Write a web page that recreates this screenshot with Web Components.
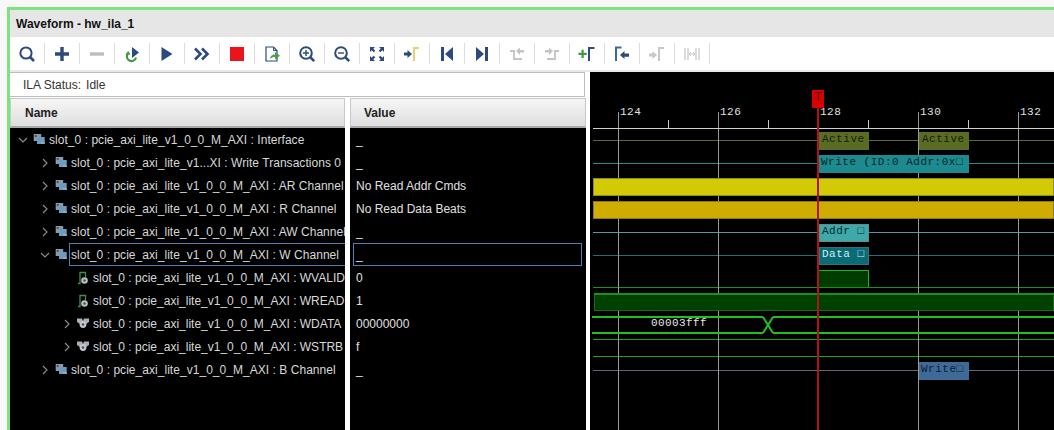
<!DOCTYPE html>
<html>
<head>
<meta charset="utf-8">
<title>Waveform - hw_ila_1</title>
<style>
  html, body { margin: 0; padding: 0; height: 100%; overflow: hidden; background: #f7f8f7; }
  body { font: 12px "Liberation Sans", Arial, sans-serif; }
</style>
</head>
<body>
<wave-window>
  <wave-titlebar>Waveform - hw_ila_1</wave-titlebar>
  <wave-toolbar></wave-toolbar>
  <wave-body>
    <wave-status slot="status">ILA Status:<span style="margin-left:5px">Idle</span></wave-status>
    <wave-header slot="name-head" indent="14">Name</wave-header>
    <wave-header slot="value-head" indent="13">Value</wave-header>

    <tree-row slot="names" level="0" state="open" icon="group">slot_0 : pcie_axi_lite_v1_0_0_M_AXI : Interface</tree-row>
    <tree-row slot="names" level="1" state="closed" icon="group">slot_0 : pcie_axi_lite_v1...XI : Write Transactions 0</tree-row>
    <tree-row slot="names" level="1" state="closed" icon="group">slot_0 : pcie_axi_lite_v1_0_0_M_AXI : AR Channel</tree-row>
    <tree-row slot="names" level="1" state="closed" icon="group">slot_0 : pcie_axi_lite_v1_0_0_M_AXI : R Channel</tree-row>
    <tree-row slot="names" level="1" state="closed" icon="group">slot_0 : pcie_axi_lite_v1_0_0_M_AXI : AW Channel</tree-row>
    <tree-row slot="names" level="1" state="open" icon="group" selected>slot_0 : pcie_axi_lite_v1_0_0_M_AXI : W Channel</tree-row>
    <tree-row slot="names" level="2" icon="wire">slot_0 : pcie_axi_lite_v1_0_0_M_AXI : WVALID</tree-row>
    <tree-row slot="names" level="2" icon="wire">slot_0 : pcie_axi_lite_v1_0_0_M_AXI : WREADY</tree-row>
    <tree-row slot="names" level="2" state="closed" icon="bus">slot_0 : pcie_axi_lite_v1_0_0_M_AXI : WDATA</tree-row>
    <tree-row slot="names" level="2" state="closed" icon="bus">slot_0 : pcie_axi_lite_v1_0_0_M_AXI : WSTRB</tree-row>
    <tree-row slot="names" level="1" state="closed" icon="group">slot_0 : pcie_axi_lite_v1_0_0_M_AXI : B Channel</tree-row>

    <value-row slot="values">_</value-row>
    <value-row slot="values">_</value-row>
    <value-row slot="values">No Read Addr Cmds</value-row>
    <value-row slot="values">No Read Data Beats</value-row>
    <value-row slot="values">_</value-row>
    <value-row slot="values" selected>_</value-row>
    <value-row slot="values">0</value-row>
    <value-row slot="values">1</value-row>
    <value-row slot="values">00000000</value-row>
    <value-row slot="values">f</value-row>
    <value-row slot="values">_</value-row>

    <wave-canvas slot="canvas"></wave-canvas>
  </wave-body>
</wave-window>

<script>
const NAVY = '#2c4a7c';
const GREY = '#bdbdbd';

// toolbar glyphs, 24x24 box with the middle at 12,12
const TOOL_ICONS = {
  search: `<circle cx="11" cy="11" r="5.6" fill="none" stroke="${NAVY}" stroke-width="2"/><path d="M15 15l4 4" stroke="${NAVY}" stroke-width="2.6"/>`,
  plus: `<path d="M5 10.3h14v3.4H5zM10.3 5h3.4v14h-3.4z" fill="${NAVY}"/>`,
  minus: `<path d="M5 10.3h14v3.4H5z" fill="${GREY}"/>`,
  relaunch: `<path d="M12 5l7 5.5-7 5.5z" fill="${NAVY}"/><path d="M8 11.5a4.6 4.6 0 1 0 8 4" fill="none" stroke="#3f9a3f" stroke-width="2.2"/><path d="M5.4 12.5l2.8-3.4 2.4 3.4z" fill="#3f9a3f"/>`,
  play: `<path d="M6.5 5l11 7-11 7z" fill="${NAVY}"/>`,
  forward: `<path d="M5 6.5l5.5 5.5L5 17.5M12 6.5l5.5 5.5-5.5 5.5" fill="none" stroke="${NAVY}" stroke-width="2.6"/>`,
  stop: `<rect x="5" y="5" width="14" height="14" fill="#e9141c"/>`,
  export: `<path d="M6 5h7.5l3.5 3.5V19H6z" fill="#fff" stroke="${NAVY}" stroke-width="1.2"/><path d="M13.500 5v3.500H17" fill="none" stroke="${NAVY}"/><path d="M10 17c0-3 2-4.500 5-4.500V10l5 3.800-5 3.700v-2.500c-2 0-3.500.4-5 2z" fill="#4aa04a"/>`,
  zoomin: `<circle cx="11" cy="11" r="5.800" fill="none" stroke="${NAVY}" stroke-width="2"/><path d="M8 10.300h6v1.400H8zM10.300 8h1.400v6h-1.400z" fill="${NAVY}"/><path d="M15.200 15.200l4 4" stroke="${NAVY}" stroke-width="2.600"/>`,
  zoomout: `<circle cx="11" cy="11" r="5.800" fill="none" stroke="${NAVY}" stroke-width="2"/><path d="M8 10.300h6v1.400H8z" fill="${NAVY}"/><path d="M15.200 15.200l4 4" stroke="${NAVY}" stroke-width="2.600"/>`,
  fit: `<path d="M5 5h5L8.300 6.700l2 2-1.600 1.600-2-2L5 10zM19 5v5l-1.700-1.700-2 2-1.600-1.600 2-2L14 5zM5 19v-5l1.700 1.700 2-2 1.600 1.600-2 2L10 19zM19 19h-5l1.700-1.700-2-2 1.600-1.600 2 2L19 14z" fill="${NAVY}"/>`,
  gotocursor: `<path d="M4 10.500h3.500V8l4.500 4-4.500 4v-2.500H4z" fill="${NAVY}"/><path d="M14 19V6h5" fill="none" stroke="#e8cf7c" stroke-width="2.200"/>`,
  first: `<path d="M6 5h3v14H6zM18 5v14l-8-7z" fill="${NAVY}"/>`,
  last: `<path d="M15 5h3v14h-3zM6 5v14l8-7z" fill="${NAVY}"/>`,
  prevedge: `<path d="M5 9h4v8h8" fill="none" stroke="#c4c4c4" stroke-width="1.800"/><path d="M11 9l4-3.500V8h4v2.500h-4V13z" fill="#c4c4c4"/>`,
  nextedge: `<path d="M19 9h-4v8H7" fill="none" stroke="#c4c4c4" stroke-width="1.800"/><path d="M13 9L9 5.500V8H5v2.500h4V13z" fill="#c4c4c4"/>`,
  addmark: `<path d="M3.500 10.700h3v-3h2.200v3h3v2.300h-3v3H6.500v-3h-3z" fill="#3f9a3f"/><path d="M14 19V6h5.500" fill="none" stroke="${NAVY}" stroke-width="2"/>`,
  prevmark: `<path d="M6 19V5.500h5.500" fill="none" stroke="#3a6a9a" stroke-width="2"/><path d="M10 13l4.500-4v2.500H19v3.200h-4.500V17z" fill="${NAVY}"/>`,
  nextmark: `<path d="M4 11.500h3.500V9l4.500 4-4.500 4v-2.500H4z" fill="#c8c8c8"/><path d="M14 19V6h5" fill="none" stroke="#c8c8c8" stroke-width="2"/>`,
  swap: `<path d="M5 6v12M8 6v12M16 6v12M19 6v12" stroke="#c8c8c8" stroke-width="1.300"/><path d="M9 12h6M9 12l2-2M9 12l2 2M15 12l-2-2M15 12l-2 2" fill="none" stroke="#c8c8c8"/>`
};

// tree icons, 14x14 box
const TREE_ICONS = {
  group: `<rect x="0.700" y="1" width="7.500" height="7" fill="#8d9aa6"/><rect x="1.700" y="2" width="2" height="2" fill="#4a5560"/><rect x="4" y="4" width="7.700" height="7" fill="#6a9cc4"/><rect x="8" y="9" width="3.700" height="2" fill="#9aa6b0"/>`,
  wire: `<path d="M1 12.500h2V1.500h5.500v5" fill="none" stroke="#3f8f52" stroke-width="1.300"/><circle cx="7.500" cy="9.500" r="3.300" fill="#b8c0c0"/><circle cx="7.500" cy="9.500" r="1.200" fill="#4a5050"/>`,
  bus: `<path d="M0 1.500h5l1 2.500v3H3L0 5zM12 1.500H7L6 4v3h3l3-2z" fill="#a8b0b8"/><circle cx="6" cy="7.500" r="3.400" fill="#c0c6cc"/><circle cx="6" cy="7.500" r="1.200" fill="#4a5050"/>`
};

class WaveWindow extends HTMLElement {
  constructor() {
    super();
    this.attachShadow( { mode: 'open' } );
    this.shadowRoot.innerHTML = `
      <style>
        :host {
          background: #fff;
          border-left: 3px solid #7fe27f;
          border-top: 3px solid #7fe27f;
          display: flex;
          flex-direction: column;
          height: 423px;
          margin: 7px 0 0 7px;
          overflow: hidden;
        }
      </style>
      <slot></slot>
    `;
  }
}

class WaveTitlebar extends HTMLElement {
  constructor() {
    super();
    this.attachShadow( { mode: 'open' } );
    this.shadowRoot.innerHTML = `
      <style>
        :host {
          align-items: center;
          background: #e6e6e6;
          color: #111;
          display: flex;
          flex: none;
          font-weight: bold;
          height: 27px;
          padding-left: 6px;
        }
      </style>
      <slot></slot>
    `;
  }
}

class WaveToolbar extends HTMLElement {
  constructor() {
    super();
    this.attachShadow( { mode: 'open' } );
    const names = Object.keys( TOOL_ICONS );
    this.shadowRoot.innerHTML = `
      <style>
        :host {
          align-items: center;
          background: #fff;
          border-bottom: 2px solid #e8e8e8;
          display: flex;
          flex: none;
          height: 33px;
        }
        .tool {
          align-items: center;
          border-right: 1px solid #dcdcdc;
          display: flex;
          height: 21px;
          justify-content: center;
          width: 34px;
        }
        svg { display: block; }
      </style>
      ${names.map( ( name ) => `<div class="tool"><svg width="24" height="24" viewBox="0 0 24 24">${TOOL_ICONS[ name ]}</svg></div>` ).join( '' )}
    `;
  }
}

class WaveBody extends HTMLElement {
  constructor() {
    super();
    this.attachShadow( { mode: 'open' } );
    this.shadowRoot.innerHTML = `
      <style>
        :host {
          display: grid;
          flex: 1;
          grid-template-columns: 335px 5px 236px 4px 1fr;
          grid-template-rows: 26px 30px 1fr;
          min-height: 0;
        }
        .status { grid-column: 1 / 4; grid-row: 1; }
        .name-head { grid-column: 1; grid-row: 2; }
        .value-head { grid-column: 3; grid-row: 2; }
        .names { background: #000; grid-column: 1; grid-row: 3; overflow: hidden; }
        .values { background: #000; grid-column: 3; grid-row: 3; overflow: hidden; }
        .canvas { background: #000; grid-column: 5; grid-row: 1 / 4; overflow: hidden; }
      </style>
      <div class="status"><slot name="status"></slot></div>
      <div class="name-head"><slot name="name-head"></slot></div>
      <div class="value-head"><slot name="value-head"></slot></div>
      <div class="names"><slot name="names"></slot></div>
      <div class="values"><slot name="values"></slot></div>
      <div class="canvas"><slot name="canvas"></slot></div>
    `;
  }
}

class WaveStatus extends HTMLElement {
  constructor() {
    super();
    this.attachShadow( { mode: 'open' } );
    this.shadowRoot.innerHTML = `
      <style>
        :host {
          align-items: center;
          border: 1px solid #bcbcbc;
          border-left: 0;
          box-sizing: border-box;
          color: #333;
          display: flex;
          height: 25px;
          margin-right: 1px;
          padding: 1px 0 0 13px;
        }
      </style>
      <slot></slot>
    `;
  }
}

class WaveHeader extends HTMLElement {
  constructor() {
    super();
    this.attachShadow( { mode: 'open' } );
    this.shadowRoot.innerHTML = `
      <style>
        :host {
          align-items: center;
          background: linear-gradient( #f6f6f6, #dedede );
          border: 1px solid #c8c8c8;
          border-bottom: 2px solid #a8a8a8;
          box-sizing: border-box;
          color: #222;
          display: flex;
          font-weight: bold;
          height: 30px;
          padding-left: ${this.getAttribute( 'indent' )}px;
        }
      </style>
      <slot></slot>
    `;
  }
}

class TreeRow extends HTMLElement {
  constructor() {
    super();
    this.attachShadow( { mode: 'open' } );
    const level = Number( this.getAttribute( 'level' ) );
    const state = this.getAttribute( 'state' );
    const selected = this.hasAttribute( 'selected' );
    let chevron = '';
    if ( state === 'open' ) {
      chevron = '<path d="M2 4l4 4 4-4" fill="none" stroke="#8a8a8a" stroke-width="1.200"/>';
    } else if ( state === 'closed' ) {
      chevron = '<path d="M4 2l4 4-4 4" fill="none" stroke="#8a8a8a" stroke-width="1.200"/>';
    }
    this.shadowRoot.innerHTML = `
      <style>
        :host {
          align-items: center;
          color: #d8d8d8;
          display: flex;
          height: 23px;
          letter-spacing: ${level < 2 ? '0.04px' : '0'};
          padding-left: ${7 + level * 22}px;
          white-space: nowrap;
        }
        .chevron { flex: none; margin-right: 4px; }
        .icon { flex: none; }
        .label {
          align-items: center;
          border: 1px solid ${selected ? '#4f80b4' : 'transparent'};
          box-sizing: border-box;
          display: flex;
          flex: 1;
          height: 23px;
          margin-right: -3px;
          min-width: 0;
          overflow: hidden;
          padding-left: 1px;
        }
      </style>
      <svg class="chevron" width="12" height="12" viewBox="0 0 12 12">${chevron}</svg>
      <svg class="icon" width="14" height="14" viewBox="0 0 14 14">${TREE_ICONS[ this.getAttribute( 'icon' ) ]}</svg>
      <div class="label"><slot></slot></div>
    `;
  }
}

class ValueRow extends HTMLElement {
  constructor() {
    super();
    this.attachShadow( { mode: 'open' } );
    const selected = this.hasAttribute( 'selected' );
    this.shadowRoot.innerHTML = `
      <style>
        :host {
          align-items: center;
          border: 1px solid ${selected ? '#4f80b4' : 'transparent'};
          box-sizing: border-box;
          color: #e0e0e0;
          display: flex;
          height: 23px;
          margin: 0 4px 0 3px;
          padding-left: 2px;
        }
      </style>
      <slot></slot>
    `;
  }
}

class WaveCanvas extends HTMLElement {
  constructor() {
    super();
    this.attachShadow( { mode: 'open' } );
    this.shadowRoot.innerHTML = `
      <style>
        :host { display: block; height: 358px; }
        svg { display: block; }
        text { font-family: "Liberation Mono", "Courier New", monospace; font-size: 11px; letter-spacing: 0.5px; }
      </style>
      <svg width="464" height="358" viewBox="590 72 464 358" shape-rendering="crispEdges">${this.draw()}</svg>
    `;
  }

  hline( y, color, x1 = 593, x2 = 1054, width = 1 ) {
    return `<rect x="${x1}" y="${y}" width="${x2 - x1}" height="${width}" fill="${color}"/>`;
  }

  block( x, y, w, h, fill, stroke, label, color, dx = 3 ) {
    let out = `<rect x="${x + 0.5}" y="${y + 0.5}" width="${w - 1}" height="${h - 1}" fill="${fill}" stroke="${stroke}"/>`;
    if ( label ) {
      out += `<text x="${x + dx}" y="${y + 10}" fill="${color}">${label}</text>`;
    }
    return out;
  }

  draw() {
    let out = '';

    // signal baselines, under the grid
    out += this.hline( 140, '#5f6b2a' );
    out += this.hline( 163, '#2c8a80' );
    out += this.hline( 232, '#4f9a9c' );
    out += this.hline( 255, '#2a6a72' );
    out += this.hline( 287, '#169416' );
    out += this.hline( 339, '#18a018' );
    out += this.hline( 356, '#18a018' );
    out += this.hline( 370, '#5f6878' );

    // ruler and grid
    for ( const x of [ 618, 718, 818, 918, 1018 ] ) {
      out += `<rect x="${x}" y="112" width="1" height="318" fill="#9a9a9a"/>`;
    }
    for ( const x of [ 668, 768, 868, 968 ] ) {
      out += `<rect x="${x}" y="120" width="1" height="8" fill="#c8c8c8"/>`;
    }
    out += this.hline( 128, '#cfcfcf' );
    [ 124, 126, 128, 130, 132 ].forEach( ( n, i ) => {
      out += `<text x="${620 + i * 100}" y="115" fill="#e0e0e0">${n}</text>`;
    } );

    // transaction blocks
    out += this.block( 819, 132, 50, 18, '#5a6b24', '#5a6b24', 'Active', '#16200a' );
    out += this.block( 919, 132, 50, 18, '#5a6b24', '#5a6b24', 'Active', '#16200a' );
    out += this.block( 819, 155, 150, 18, '#1c8a8e', '#1c8a8e', 'Write (ID:0 Addr:0x\u25A1', '#06282a', 2 );

    // read channels
    out += this.block( 593, 178, 461, 18, '#d2ca04', '#8f8a20' );
    out += this.block( 593, 201, 461, 18, '#d0ac00', '#8c7a1e' );

    out += this.block( 819, 224, 50, 18, '#3fa8a8', '#5e8c8c', 'Addr \u25A1', '#08282a' );
    out += this.block( 819, 247, 50, 18, '#0a6a76', '#3a7078', 'Data \u25A1', '#d0f0f0' );

    // WVALID pulse, WREADY level
    out += `<rect x="819" y="270" width="50" height="17" fill="#003c00"/>`;
    out += this.hline( 270, '#20b020', 819, 869 );
    out += `<rect x="868" y="270" width="1" height="17" fill="#20b020"/>`;
    out += this.block( 594, 293, 460, 18, '#004000', '#0e700e' );
    out += this.hline( 293, '#1d8f1d', 594, 1054, 2 );

    // WDATA bus with one transition
    out += this.hline( 316, '#20c020', 592, 763, 2 );
    out += this.hline( 332, '#20c020', 592, 763, 2 );
    out += this.hline( 316, '#20c020', 773, 1054, 2 );
    out += this.hline( 332, '#20c020', 773, 1054, 2 );
    out += `<path d="M763 317L773 333M763 333L773 317" stroke="#20c020" stroke-width="2" fill="none" shape-rendering="auto"/>`;
    out += `<text x="651" y="326" fill="#e8e8e8" style="letter-spacing:0.4px">00003fff</text>`;

    out += this.block( 919, 362, 50, 18, '#3f6a98', '#3f6a98', 'Write\u25A1', '#0a1c34', 2 );

    // trigger marker on top of everything
    out += `<rect x="817" y="108" width="2" height="322" fill="#b01414"/>`;
    out += `<rect x="812" y="90" width="12" height="18" fill="#d80000"/>`;
    out += `<text x="814.500" y="101" fill="#500000" style="letter-spacing:0;font-size:12px">T</text>`;
    return out;
  }
}

customElements.define( 'wave-window', WaveWindow );
customElements.define( 'wave-titlebar', WaveTitlebar );
customElements.define( 'wave-toolbar', WaveToolbar );
customElements.define( 'wave-body', WaveBody );
customElements.define( 'wave-status', WaveStatus );
customElements.define( 'wave-header', WaveHeader );
customElements.define( 'tree-row', TreeRow );
customElements.define( 'value-row', ValueRow );
customElements.define( 'wave-canvas', WaveCanvas );
</script>
</body>
</html>
